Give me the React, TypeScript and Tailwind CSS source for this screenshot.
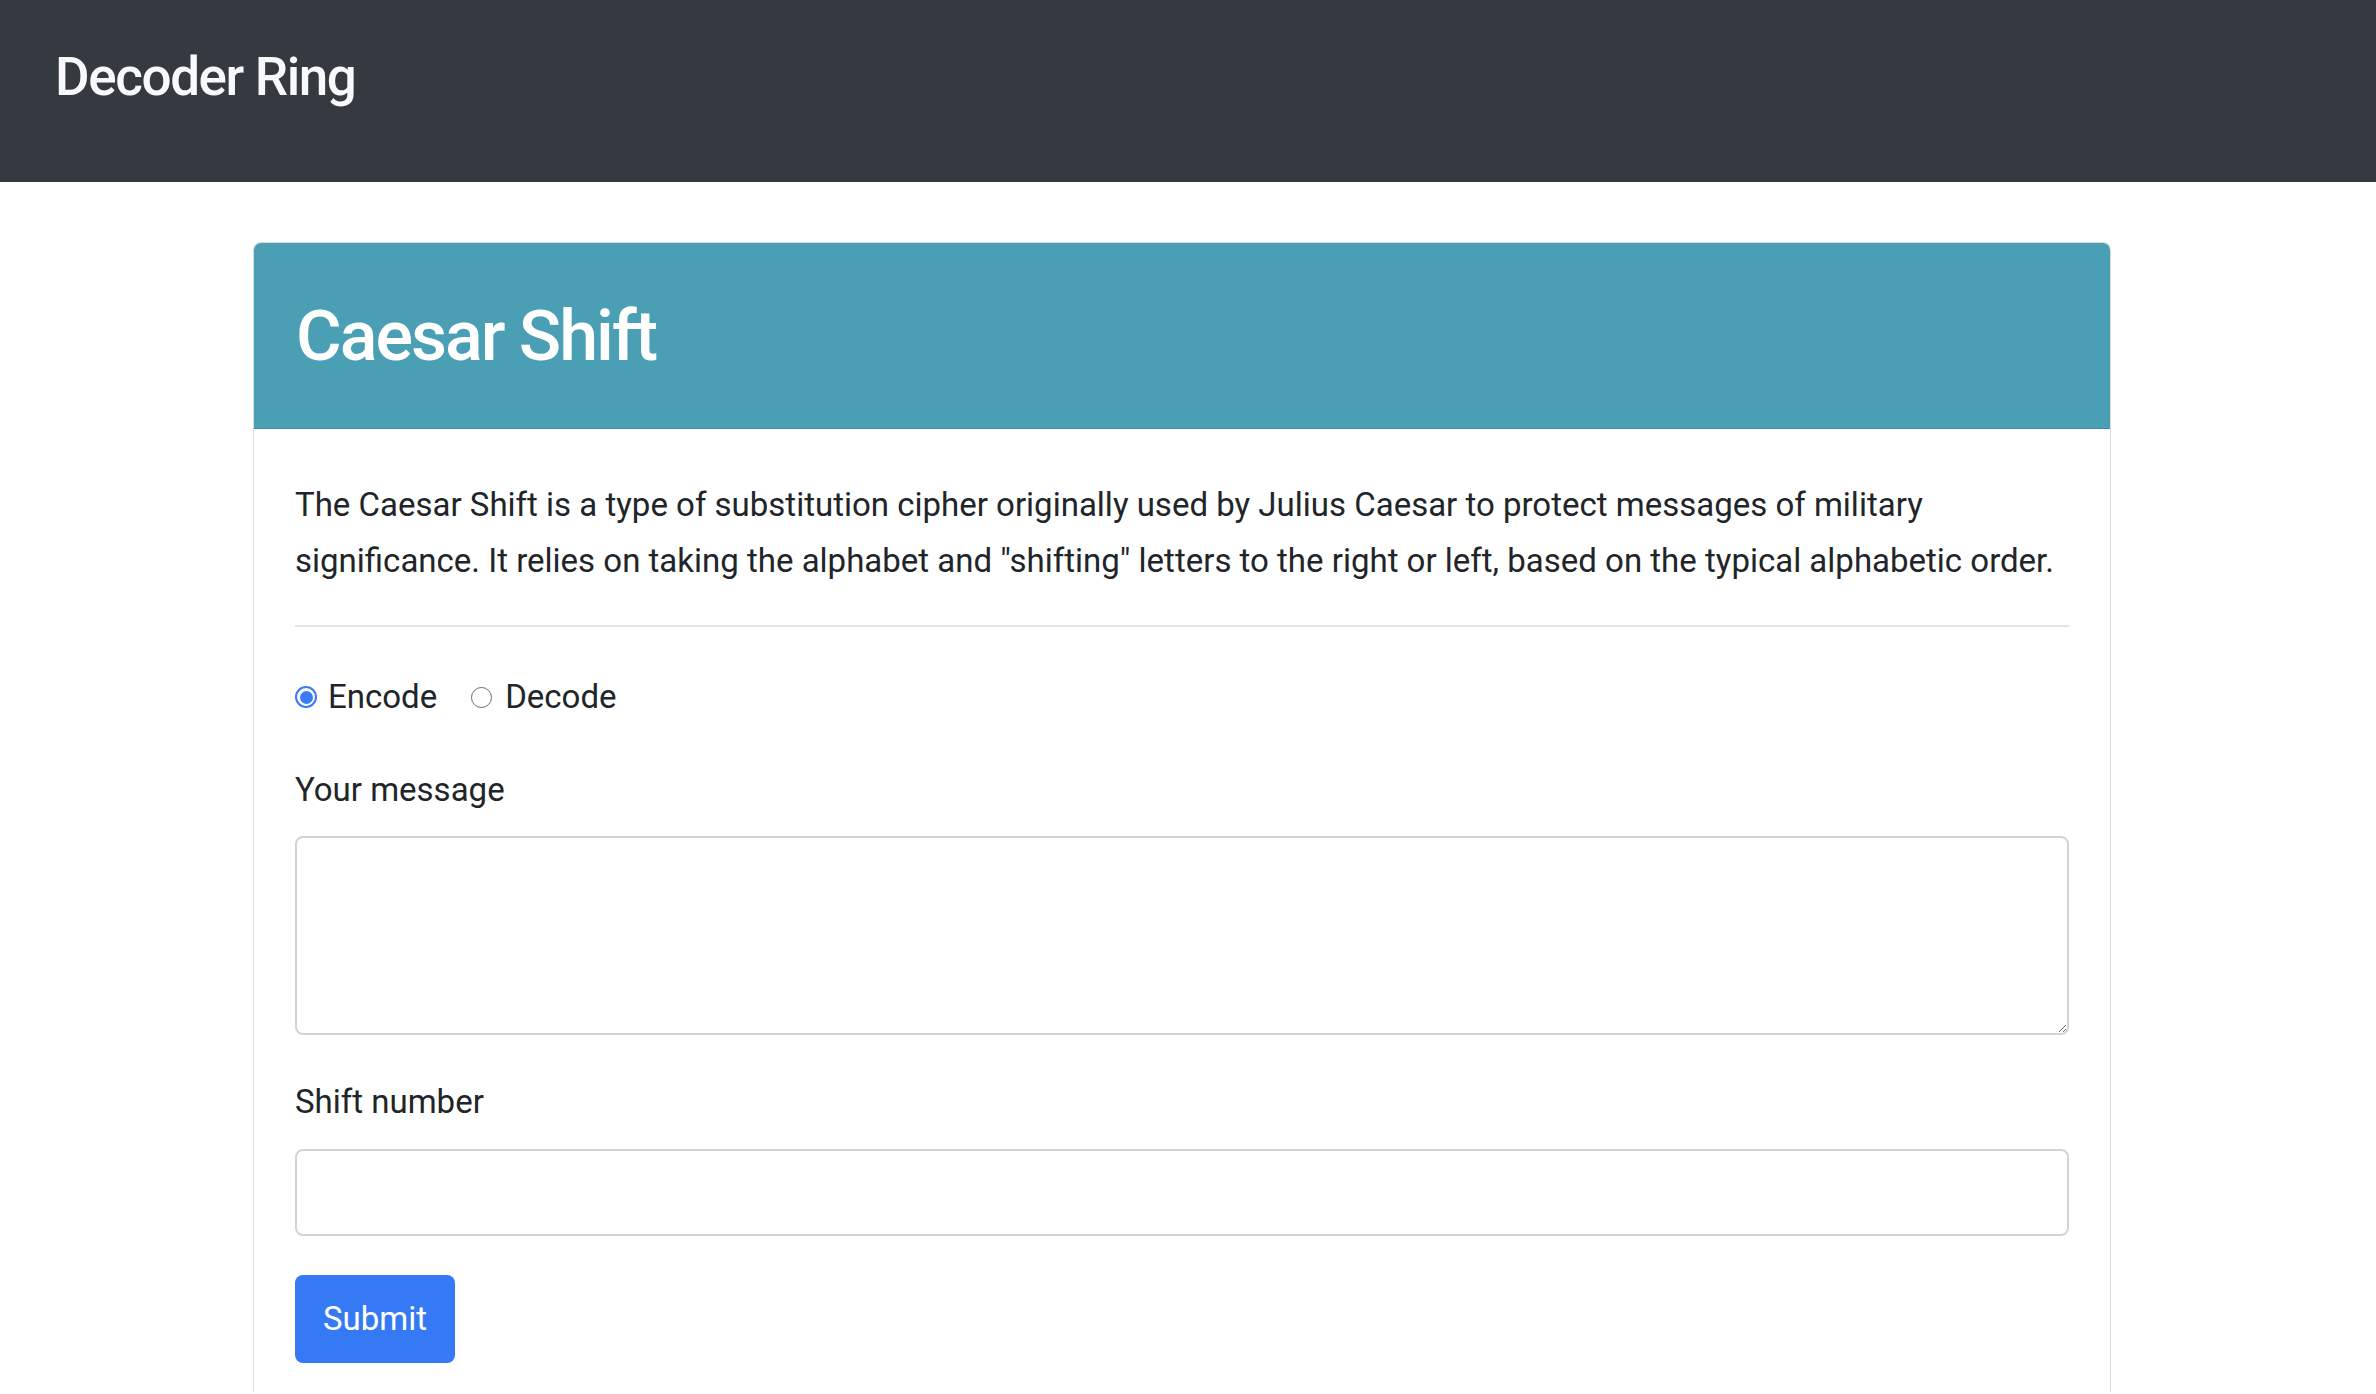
import React from "react";

export default function App() {
  return (
    <div className="min-h-[1394px] bg-white text-[#212529]" style={{ fontFamily: "Roboto, 'Liberation Sans', sans-serif" }}>
      <nav className="h-[182px] bg-[#343a40] pl-[55px] pt-[37px]">
        <div className="text-[53px] leading-[80px] font-medium tracking-[-1.4px] text-[#f8f9fa]">Decoder Ring</div>
      </nav>
      <main className="pt-[60px] pl-[253px]">
        <div className="w-[1858px] rounded-t-[8px] border border-b-0 border-[#dcdcdc] min-h-[1150px]">
          <div className="h-[186px] rounded-t-[7px] bg-[#4a9fb5] border-b border-[#3f8c9f] flex items-center pl-[42px]">
            <h1 className="text-[70px] leading-none font-medium tracking-[-2px] text-white">Caesar Shift</h1>
          </div>
          <div className="px-[41px] pt-[48px]">
            <p className="text-[33px] leading-[56px]">
              The Caesar Shift is a type of substitution cipher originally used by Julius Caesar to protect messages of military significance. It relies on taking the alphabet and "shifting" letters to the right or left, based on the typical alphabetic order.
            </p>
            <hr className="mt-[36px] border-0 border-t-2 border-[#e5e5e5]" />
            <div className="mt-[50px] flex items-center h-[40px] text-[33px]">
              <label className="flex items-center">
                <span className="w-[22px] h-[22px] rounded-full border-2 border-[#3a7bf5] flex items-center justify-center">
                  <span className="w-[13px] h-[13px] rounded-full bg-[#3a7bf5]" />
                </span>
                <span className="ml-[11px]">Encode</span>
              </label>
              <label className="flex items-center ml-[34px]">
                <span className="w-[21px] h-[21px] rounded-full border border-[#6b6b6b] bg-white" />
                <span className="ml-[13px]">Decode</span>
              </label>
            </div>
            <label className="block mt-[49px] text-[33px] leading-[48px]">Your message</label>
            <textarea className="block mt-[22px] w-full h-[199px] rounded-[8px] border-2 border-[#ced4da] bg-white outline-none" />
            <label className="block mt-[43px] text-[33px] leading-[48px]">Shift number</label>
            <input type="text" className="block mt-[23px] w-full h-[87px] rounded-[8px] border-2 border-[#ced4da] bg-white outline-none" />
            <button className="mt-[39px] h-[88px] px-[28px] rounded-[8px] bg-[#3679f5] text-white text-[33px]">Submit</button>
          </div>
        </div>
      </main>
    </div>
  );
}
